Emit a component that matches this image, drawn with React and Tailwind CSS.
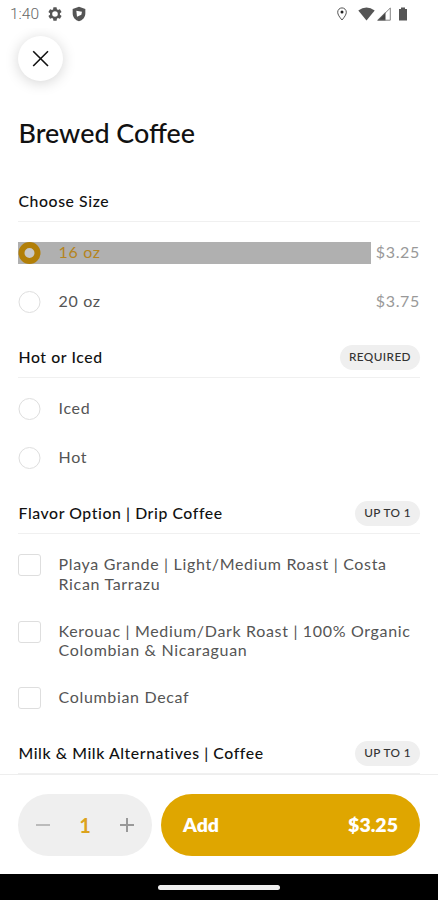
import React from "react";

function StatusBar() {
  return (
    <div className="flex h-7 shrink-0 items-center justify-between pl-[10px] pr-[30px] text-[#555]">
      <div className="flex items-center">
        <span className="mt-px w-[37px] font-[Roboto,sans-serif] text-[15.5px] font-light text-[#666]">1:40</span>
        <svg className="h-4 w-4" viewBox="0 0 24 24" fill="currentColor">
          <path fillRule="evenodd" d="M19.4 13a7.500 7.500 0 0 0 0-2l2.100-1.650a.5.5 0 0 0 .12-.64l-2-3.460a.5.5 0 0 0-.61-.22l-2.490 1a7.300 7.300 0 0 0-1.690-.98l-.38-2.650A.49.49 0 0 0 14 2h-4a.49.49 0 0 0-.49.42l-.38 2.650a7.700 7.700 0 0 0-1.690.98l-2.490-1a.49.49 0 0 0-.61.22l-2 3.460a.49.49 0 0 0 .12.64L4.570 11a7.900 7.900 0 0 0 0 2l-2.110 1.650a.5.5 0 0 0-.12.640l2 3.460c.12.220.39.300.61.220l2.490-1c.52.400 1.080.730 1.690.980l.38 2.650c.03.240.24.420.49.420h4c.25 0 .46-.18.49-.42l.38-2.650a7.700 7.700 0 0 0 1.690-.98l2.490 1c.23.090.49 0 .61-.22l2-3.460a.5.5 0 0 0-.12-.64ZM12 7.800a4.200 4.200 0 1 1 0 8.400 4.200 4.200 0 0 1 0-8.400Z" />
        </svg>
        <svg className="ml-[8px] h-4 w-4" viewBox="0 0 24 24" fill="currentColor">
          <path fillRule="evenodd" d="M12 1 2.500 4.500V11c0 5.900 4 10.700 9.500 12 5.500-1.300 9.500-6.100 9.500-12V4.500L12 1ZM8 7l8.500 1.500-1 4.500L9 16Z" />
        </svg>
      </div>
      <div className="flex items-center">
        <svg className="h-[14px] w-[12px]" viewBox="0 0 12 14" fill="none" stroke="currentColor">
          <path d="M6 13C3.500 10 1.700 7.600 1.700 5.200a4.300 4.300 0 0 1 8.600 0C10.300 7.600 8.500 10 6 13Z" />
          <circle cx="6" cy="5" r="1.500" fill="#222" stroke="none" />
        </svg>
        <svg className="ml-[10px] h-[14px] w-[17px]" viewBox="0 0 17 14" fill="currentColor">
          <path d="M0.300 3.500Q8.500-2.500 16.700 3.500L8.500 13.500Z" />
        </svg>
        <svg className="ml-[2px] h-[14px] w-[14px]" viewBox="0 0 14 14">
          <path d="M0 13.500 8.500 5V13.500Z" fill="#444" />
          <path d="M1 13.200 13.300 1V13.200Z" fill="none" stroke="#777" strokeWidth="0.900" />
        </svg>
        <svg className="ml-[7px] h-[14px] w-[10px]" viewBox="0 0 10 14" fill="currentColor">
          <path d="M3 .5h4v1.500h2v11.500h-8V2H3Z" />
        </svg>
      </div>
    </div>
  );
}

function Section({ title, badge, children }) {
  return (
    <section className="flex shrink-0 flex-col">
      <header className="flex h-[41px] items-center justify-between border-b border-[#f0f0f0]">
        <h2 className="pl-[0.5px] text-[15.8px] font-medium tracking-[0.58px] text-[#111]">{title}</h2>
        {badge && (
          <span className="flex h-[25px] items-center rounded-full bg-[#efefef] px-[9px] text-[11.8px] font-medium tracking-[0.4px] text-[#333]">
            {badge}
          </span>
        )}
      </header>
      {children}
    </section>
  );
}

function Radio({ label, price }) {
  return (
    <div className="flex h-[22px] items-center">
      <svg className="h-[22px] w-[23px] shrink-0" viewBox="0 0 23 22" fill="none" stroke="#dedede">
        <circle cx="11.500" cy="11" r="10.500" />
      </svg>
      <span className="-mt-[2px] ml-[17.5px] flex-1 text-[16px] tracking-[0.67px] text-[#555]">{label}</span>
      {price && <span className="-mt-[2px] text-[16px] tracking-[0.67px] text-[#999]">{price}</span>}
    </div>
  );
}

function SelectedRadio({ label, price }) {
  return (
    <div className="flex h-[22px] items-center justify-between">
      <div className="flex h-[22px] w-[353px] items-center bg-[#b0b0b0]">
        <svg className="h-[22px] w-[23px] shrink-0" viewBox="0 0 23 22" fill="#c8c8c8" stroke="#b27f08" strokeWidth="6">
          <circle cx="11.500" cy="11" r="8" />
        </svg>
        <span className="-mt-[2px] ml-[17.5px] text-[16px] tracking-[0.67px] text-[#b58420]">{label}</span>
      </div>
      <span className="-mt-[2px] text-[16px] tracking-[0.67px] text-[#999]">{price}</span>
    </div>
  );
}

function Check({ lines }) {
  return (
    <div className="flex items-start">
      <span className="h-[22px] w-[23px] shrink-0 rounded-[3px] border border-[#dedede]" />
      <p className="mb-px ml-[17.5px] text-[16px] leading-[19.750px] tracking-[0.67px] text-[#555]">
        {lines.map((line) => (
          <span key={line} className="block whitespace-nowrap">{line}</span>
        ))}
      </p>
    </div>
  );
}

export default function App() {
  return (
    <div className="flex h-[900px] w-[438px] flex-col overflow-hidden bg-white font-[Lato,sans-serif]">
      <StatusBar />
      <main className="flex min-h-0 flex-1 flex-col overflow-hidden px-[18px]">
        <button className="mt-2 flex h-[45px] w-[45px] shrink-0 items-center justify-center rounded-full bg-white shadow-[0_2px_14px_rgba(0,0,0,0.17)]">
          <svg className="h-[18px] w-[18px]" viewBox="0 0 18 18" stroke="#111" strokeWidth="1.600">
            <path d="M1.200 1.200 16 16M16 1.200 1.200 16" />
          </svg>
        </button>
        <h1 className="mt-[34px] h-[66px] shrink-0 pl-[0.5px] text-[26.900px] font-medium leading-9 text-[#111]">Brewed Coffee</h1>
        <Section title="Choose Size">
          <div className="flex flex-col gap-[27px] pb-6 pt-5">
            <SelectedRadio label="16 oz" price="$3.25" />
            <Radio label="20 oz" price="$3.75" />
          </div>
        </Section>
        <Section title="Hot or Iced" badge="REQUIRED">
          <div className="flex flex-col gap-[27px] pb-6 pt-5">
            <Radio label="Iced" />
            <Radio label="Hot" />
          </div>
        </Section>
        <Section title="Flavor Option | Drip Coffee" badge="UP TO 1">
          <div className="flex flex-col gap-[26px] pb-6 pt-5">
            <Check lines={["Playa Grande | Light/Medium Roast | Costa", "Rican Tarrazu"]} />
            <Check lines={["Kerouac | Medium/Dark Roast | 100% Organic", "Colombian & Nicaraguan"]} />
            <Check lines={["Columbian Decaf"]} />
          </div>
        </Section>
        <Section title="Milk & Milk Alternatives | Coffee" badge="UP TO 1" />
      </main>
      <footer className="flex h-[100px] shrink-0 items-start gap-[9px] border-t border-[#eee] bg-white px-[18px] pt-[19px]">
        <div className="flex h-[62px] w-[134px] items-center justify-between rounded-full bg-[#efefef] px-[18px]">
          <svg className="h-[14px] w-[14px]" viewBox="0 0 14 14" stroke="#bbb" strokeWidth="2"><path d="M0 7H14" /></svg>
          <span className="text-[20px] font-bold text-[#dca31c]">1</span>
          <svg className="h-[14px] w-[14px]" viewBox="0 0 14 14" stroke="#999" strokeWidth="2"><path d="M0 7H14M7 0V14" /></svg>
        </div>
        <button className="flex h-[62px] flex-1 items-center justify-between rounded-full bg-[#dfa600] px-[22px] text-[19.5px] font-extrabold text-white">
          <span>Add</span>
          <span>$3.25</span>
        </button>
      </footer>
      <div className="flex h-[26px] shrink-0 items-center justify-center bg-black">
        <span className="h-[5px] w-[122px] rounded-full bg-[#eee]" />
      </div>
    </div>
  );
}
